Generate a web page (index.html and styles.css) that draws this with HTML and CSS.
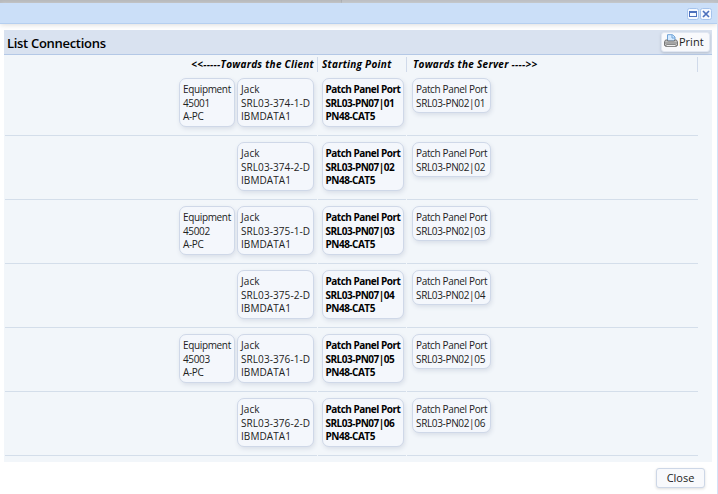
FILE: index.html
```
<!DOCTYPE html>
<html lang="en">
<head>
<meta charset="utf-8">
<title>List Connections</title>
<link rel="stylesheet" href="styles.css">
</head>
<body>
<div class="backdrop"></div>
<div class="window">
  <div class="titlebar">
    <svg class="tool" viewBox="0 0 12 12"><rect x=".5" y=".5" width="11" height="11" rx="2"/><path class="fill" fill-rule="evenodd" d="M2 3h8v6H2zM3 5v3h6V5z"/></svg>
    <svg class="tool" viewBox="0 0 12 12"><rect x=".5" y=".5" width="11" height="11" rx="2"/><path class="cross" d="M3 3l6 6M9 3L3 9"/></svg>
  </div>
  <div class="panel">
    <div class="heading">
      <h1>List Connections</h1>
      <button class="print">
        <svg viewBox="0 0 14 14"><path d="M3.5 7V.7h5L11 3v4z" fill="#d5eaff" stroke="#6fa3d8"/><path d="M8 1v3h3" fill="none" stroke="#6fa3d8"/><path d="M1.5 6h2v1h7V6h2l1 2v3.500H.5V8z" fill="#c4c4c4" stroke="#777"/><path d="M1 9h12" stroke="#858585"/><path d="M2.500 10.500h9l1 2h-11z" fill="#eee" stroke="#888"/></svg>
        <span>Print</span>
      </button>
    </div>
    <div class="grid">
      <div class="row head"><div class="client">&lt;&lt;-----Towards the Client</div><div class="start">Starting Point</div><div class="server">Towards the Server ----&gt;&gt;</div></div>
      <div class="row"><div class="client"><div class="card equipment">Equipment<br>45001<br>A-PC</div><div class="card jack">Jack<br>SRL03-374-1-D<br>IBMDATA1</div></div><div class="start"><div class="card">Patch Panel Port<br>SRL03-PN07|01<br>PN48-CAT5</div></div><div class="server"><div class="card">Patch Panel Port<br>SRL03-PN02|01</div></div></div>
      <div class="row"><div class="client"><div class="card jack">Jack<br>SRL03-374-2-D<br>IBMDATA1</div></div><div class="start"><div class="card">Patch Panel Port<br>SRL03-PN07|02<br>PN48-CAT5</div></div><div class="server"><div class="card">Patch Panel Port<br>SRL03-PN02|02</div></div></div>
      <div class="row"><div class="client"><div class="card equipment">Equipment<br>45002<br>A-PC</div><div class="card jack">Jack<br>SRL03-375-1-D<br>IBMDATA1</div></div><div class="start"><div class="card">Patch Panel Port<br>SRL03-PN07|03<br>PN48-CAT5</div></div><div class="server"><div class="card">Patch Panel Port<br>SRL03-PN02|03</div></div></div>
      <div class="row"><div class="client"><div class="card jack">Jack<br>SRL03-375-2-D<br>IBMDATA1</div></div><div class="start"><div class="card">Patch Panel Port<br>SRL03-PN07|04<br>PN48-CAT5</div></div><div class="server"><div class="card">Patch Panel Port<br>SRL03-PN02|04</div></div></div>
      <div class="row"><div class="client"><div class="card equipment">Equipment<br>45003<br>A-PC</div><div class="card jack">Jack<br>SRL03-376-1-D<br>IBMDATA1</div></div><div class="start"><div class="card">Patch Panel Port<br>SRL03-PN07|05<br>PN48-CAT5</div></div><div class="server"><div class="card">Patch Panel Port<br>SRL03-PN02|05</div></div></div>
      <div class="row"><div class="client"><div class="card jack">Jack<br>SRL03-376-2-D<br>IBMDATA1</div></div><div class="start"><div class="card">Patch Panel Port<br>SRL03-PN07|06<br>PN48-CAT5</div></div><div class="server"><div class="card">Patch Panel Port<br>SRL03-PN02|06</div></div></div>
    </div>
  </div>
  <div class="footer"><button class="close">Close</button></div>
</div>
</body>
</html>
```
FILE: styles.css
```
* { box-sizing: border-box; }
body { margin: 0; height: 494px; overflow: hidden; background: #fff; color: #222; font: 10px/13.6px "Open Sans", "Noto Sans", sans-serif; }
.backdrop { height: 3px; background: linear-gradient(90deg, #b5b7ba 341px, #a5a9ae 341px 342px, #babdc2 342px); }
.window { height: 491px; border-right: 1px solid #d3e2f8; }
.titlebar { height: 21px; display: flex; justify-content: flex-end; gap: 1px; padding: 5px 5px 0 0; background: #cbdff8; border-bottom: 1px solid #b5cff0; box-shadow: 0 1px 5px #ddd; }
.tool { width: 12px; height: 12px; }
.tool rect { fill: #f5f9ff; stroke: #a5c3ec; }
.tool .fill { fill: #4b70bd; }
.tool .cross { fill: none; stroke: #4b70bd; stroke-width: 1.7; }
.panel { height: 432px; margin: 6px 5px 0 4px; background: #f2f6fa; overflow: hidden; }
.heading { height: 25px; display: flex; justify-content: space-between; background: #d9e2f0; border-bottom: 1px solid #b4c8e6; padding: 2px 2px 0 3px; }
h1 { margin: 0; color: #000; font-size: 13px; line-height: 23px; font-weight: 600; letter-spacing: -.3px; white-space: nowrap; }
button { font: 11px/18px "Open Sans", sans-serif; color: #222; background: #f8f9fc; padding: 0; }
.print { width: 49px; height: 20px; display: flex; gap: 1px; padding: 0 2px; border: 1px solid #e1e7f2; border-radius: 3px; box-shadow: 0 1px 3px #b4bdcb; }
.print svg { width: 14px; height: 14px; margin-top: 1px; flex: none; }
.grid { padding-left: 1px; width: 694px; }
.row { height: 64px; display: grid; grid-template-columns: 312px 88px 291px; gap: 1px; }
.row > div { border-bottom: 1px solid #d4deea; padding-top: 6px; display: flex; align-items: flex-start; gap: 2px; white-space: nowrap; }
.row .client { justify-content: flex-end; padding-right: 3px; }
.row .start { padding-left: 4px; font-weight: 700; color: #000; }
.row .server { padding-left: 5px; }
.head { height: 17px; color: #000; font-style: italic; font-weight: 700; letter-spacing: .27px; }
.row.head { grid-template-columns: 313px 88px 290px; }
.row.head > div { height: 15px; margin-top: 2px; padding-top: 0; border-bottom: 0; border-right: 1px solid #d0daea; line-height: 15px; }
.row.head .start { padding-left: 3px; }
.card { width: 79px; border: 1px solid #cfd8e8; border-radius: 7px; padding: 4px 3px 0; height: 49px; background: #f4f7fc; box-shadow: 1px 2px 4px #d9dfe8; }
.equipment { width: 56px; letter-spacing: -.35px; }
.jack { width: 77px; letter-spacing: .08px; }
.start .card { width: 82px; padding-left: 2.5px; letter-spacing: -.5px; }
.server .card { height: 35px; letter-spacing: -.34px; }
.footer { display: flex; justify-content: flex-end; padding: 6px 12px 0 0; }
.close { width: 49px; height: 20px; border: 1px solid #cdd7e7; border-radius: 3px; box-shadow: 0 1px 3px #ddd; }
```
